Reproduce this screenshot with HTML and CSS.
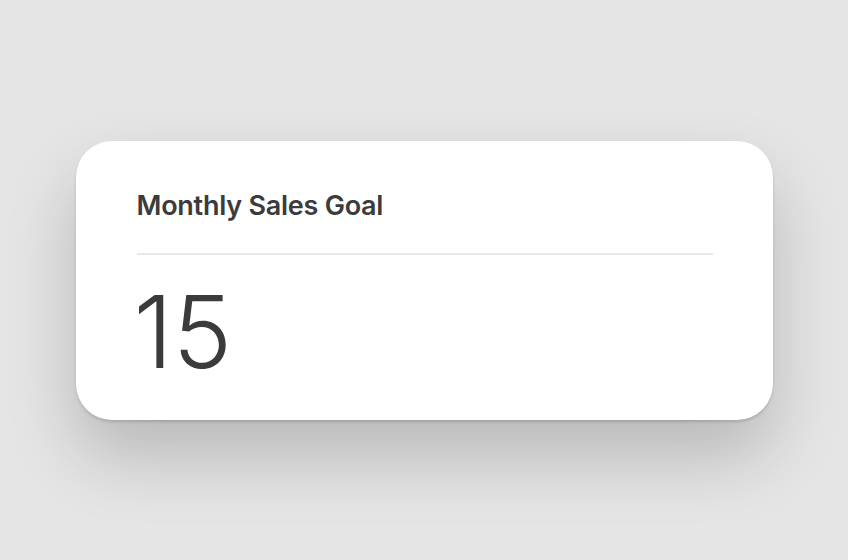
FILE: index.html
```html
<!DOCTYPE html>
<html>
<head>
<meta charset="utf-8">
<link rel="stylesheet" href="styles.css">
</head>
<body>
<div class="stage">
  <div class="card">
    <div class="title">Monthly Sales Goal</div>
    <div class="divider"></div>
    <div class="value">15</div>
  </div>
</div>
</body>
</html>
```

FILE: styles.css
```css
html, body {
  margin: 0;
  padding: 0;
  background: #e5e5e5;
}
.stage {
  width: 848px;
  height: 560px;
  display: flex;
  align-items: center;
  justify-content: center;
}
.card {
  box-sizing: border-box;
  width: 697px;
  height: 279px;
  background: #ffffff;
  border-radius: 36px;
  padding: 48px 60px 0 61px;
  box-shadow: 0 2px 3px rgba(0,0,0,0.14), 0 36px 70px rgba(0,0,0,0.2);
  font-family: Inter, "Noto Sans", sans-serif;
  color: #3b3b3b;
}
.title {
  font-size: 27px;
  font-weight: 600;
  line-height: 34px;
  letter-spacing: -0.25px;
}
.divider {
  height: 2px;
  background: #e8e8e8;
  margin-top: 30px;
}
.value {
  margin-top: 27px;
  font-size: 100px;
  font-weight: 300;
  line-height: 100px;
  margin-left: -3px;
}
```
